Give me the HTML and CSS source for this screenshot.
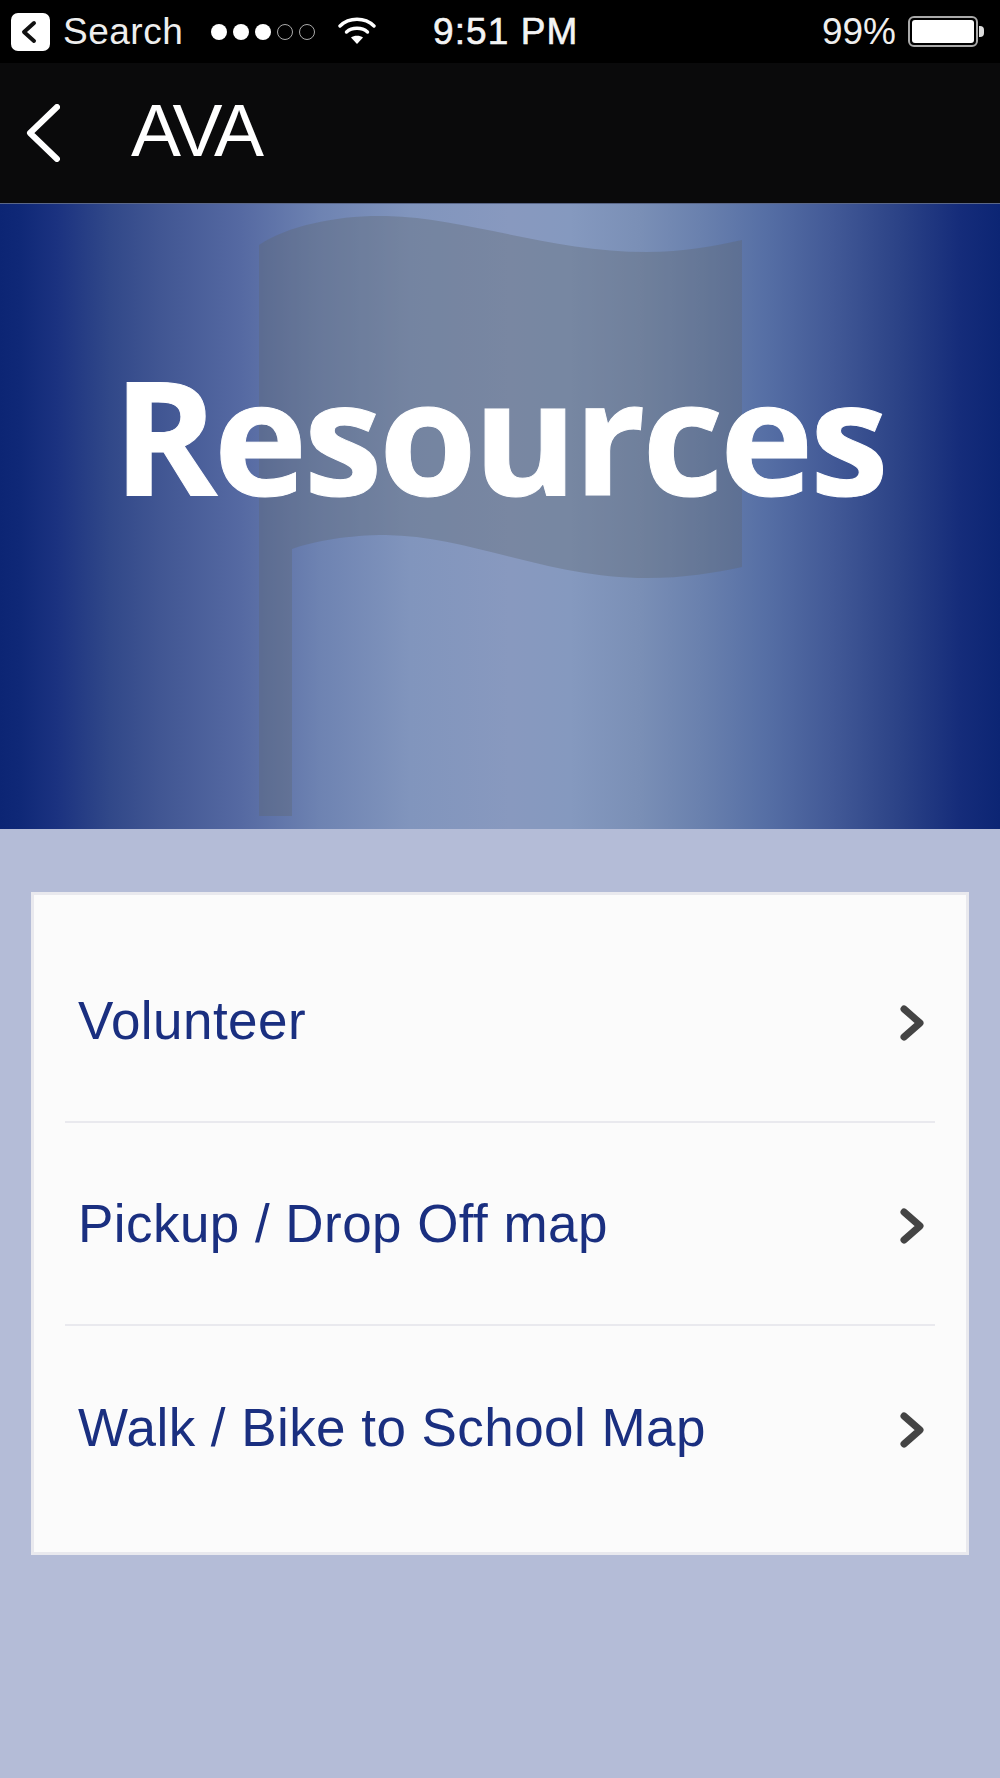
FILE: index.html
```html
<!DOCTYPE html>
<html lang="en">
<head>
  <meta charset="UTF-8">
  <meta name="viewport" content="width=device-width, initial-scale=1.0">
  <title>AVA - Resources</title>
  <link rel="stylesheet" href="styles.css">
</head>
<body>
  <div class="status-bar">
    <div class="status-left">
      <span class="back-badge">
        <svg width="39" height="38" viewBox="0 0 39 38"><path d="M23 10 L13 19 L23 28" fill="none" stroke="#111" stroke-width="4" stroke-linecap="round" stroke-linejoin="round"/></svg>
      </span>
      <span class="status-text search">Search</span>
      <span class="signal">
        <i class="dot"></i><i class="dot"></i><i class="dot"></i><i class="dot off"></i><i class="dot off"></i>
      </span>
      <svg class="wifi" width="38" height="29" viewBox="0 0 38 29">
        <path d="M2 10 C11 1 27 1 36 10" fill="none" stroke="#fff" stroke-width="3.4" stroke-linecap="round"/>
        <path d="M8.5 16 C14 11 24 11 29.5 16" fill="none" stroke="#fff" stroke-width="3.4" stroke-linecap="round"/>
        <path d="M13 21.5 C16 19 22 19 25 21.5 L19 28 Z" fill="#fff"/>
      </svg>
    </div>
    <div class="status-time">9:51 PM</div>
    <div class="status-right">
      <span class="status-text">99%</span>
      <span class="battery"><span class="battery-fill"></span></span>
      <span class="battery-nub"></span>
    </div>
  </div>

  <div class="nav-bar">
    <svg class="nav-back" width="34" height="58" viewBox="0 0 34 58"><path d="M31 3 L4 29 L31 55" fill="none" stroke="#fff" stroke-width="6" stroke-linecap="round" stroke-linejoin="round"/></svg>
    <div class="nav-title">AVA</div>
  </div>

  <div class="hero">
    <svg class="hero-flag" width="483" height="601" viewBox="0 0 483 601">
      <path d="M0 30 C30 10 80 0 127 1 C210 3 290 37 388 37 C425 37 455 31 483 25 L483 352 C455 358 425 363 388 363 C290 363 210 321 127 320 C90 320 55 326 33 334 L33 601 L0 601 Z" fill="#5f6670" fill-opacity="0.36"/>
    </svg>
    <h1 class="hero-title">Resources</h1>
  </div>

  <div class="content">
    <div class="card">
      <a class="row">
        <span class="row-label">Volunteer</span>
        <svg class="chevron" width="26" height="38" viewBox="0 0 26 38"><path d="M5 5 L21 19 L5 33" fill="none" stroke="#444" stroke-width="7" stroke-linecap="round" stroke-linejoin="round"/></svg>
      </a>
      <a class="row">
        <span class="row-label">Pickup / Drop Off map</span>
        <svg class="chevron" width="26" height="38" viewBox="0 0 26 38"><path d="M5 5 L21 19 L5 33" fill="none" stroke="#444" stroke-width="7" stroke-linecap="round" stroke-linejoin="round"/></svg>
      </a>
      <a class="row">
        <span class="row-label">Walk / Bike to School Map</span>
        <svg class="chevron" width="26" height="38" viewBox="0 0 26 38"><path d="M5 5 L21 19 L5 33" fill="none" stroke="#444" stroke-width="7" stroke-linecap="round" stroke-linejoin="round"/></svg>
      </a>
    </div>
  </div>
</body>
</html>
```

FILE: styles.css
```css
body, h1 {
    margin: 0;
}

body {
    width: 1000px;
    height: 1778px;
    overflow: hidden;
    background-color: #b4bcd7;
    font-family: "Liberation Sans", Arial, sans-serif;
}

/* status bar */
.status-bar {
    height: 63px;
    background-color: #000;
    color: #eee;
    display: flex;
    align-items: center;
}
.status-left {
    display: flex;
    align-items: center;
    padding-left: 11px;
}
.back-badge {
    width: 39px;
    height: 38px;
    background-color: #fff;
    border-radius: 7px;
    display: flex;
}
.status-text {
    font-size: 37px;
    line-height: 40px;
}
.search {
    margin-left: 13px;
    width: 148px;
    letter-spacing: .5px;
}
.signal {
    display: flex;
    gap: 6px;
}
.dot {
    width: 16px;
    height: 16px;
    border-radius: 50%;
    background-color: #fff;
    box-sizing: border-box;
}
.dot.off {
    background: none;
    border: 1.5px solid #aaa;
}
.wifi {
    margin-left: 23px;
    margin-top: -2px;
}
.status-time {
    margin-left: 57px;
    font-size: 37px;
    font-weight: 500;
    letter-spacing: 1.1px;
    color: #f4f4f4;
    -webkit-text-stroke: .6px #f4f4f4;
}
.status-right {
    margin-left: auto;
    display: flex;
    align-items: center;
    padding-right: 16px;
}
.status-right .status-text {
    margin-right: 12px;
}
.battery {
    width: 70px;
    height: 31px;
    border: 2px solid #aaa;
    border-radius: 6px;
    box-sizing: border-box;
    padding: 2px;
    display: flex;
}
.battery-fill {
    flex: 1;
    background-color: #fff;
    border-radius: 3px;
}
.battery-nub {
    width: 5px;
    height: 11px;
    background-color: #ddd;
    border-radius: 0 4px 4px 0;
    margin-left: 1px;
}

/* nav */
.nav-bar {
    height: 140px;
    background-color: #0a0a0b;
    display: flex;
    align-items: center;
    padding-left: 26px;
    box-sizing: border-box;
}
.nav-back {
    margin-top: -1px;
}
.nav-title {
    margin-left: 71px;
    margin-top: -6px;
    font-size: 75px;
    letter-spacing: -3px;
    color: #fff;
}

/* hero */
.hero {
    height: 626px;
    position: relative;
    background: linear-gradient(to right, #0c2574 0%, #0f2877 2%, #1b3280 5.7%, #314889 11%, #415693 16%, #5569a2 24%, #6e83b2 32%, #8195bd 41%, #8899bf 51%, #8599bf 57%, #7a8fb6 64%, #6a81ae 70%, #566fa5 76.5%, #435a97 83%, #2b4286 90%, #152c7a 96%, #0c2574 100%);
    border-top: 1px solid #5a6788;
    box-sizing: border-box;
    text-align: center;
}
.hero-flag {
    position: absolute;
    left: 259px;
    top: 11px;
}
.hero-title {
    position: relative;
    font-family: "Open Sans", "Noto Sans", sans-serif;
    font-weight: 700;
    font-size: 158px;
    line-height: 200px;
    letter-spacing: -3.4px;
    color: #fff;
    padding-top: 130px;
    padding-right: 2px;
    -webkit-text-stroke: 1px #fff;
}

/* list */
.content {
    padding: 63px 31px 0;
}
.card {
    background-color: #fbfbfb;
    border: 3px solid #e9e9ee;
    box-sizing: border-box;
    height: 663px;
    padding: 25px 31px 0;
}
.row {
    height: 203px;
    display: flex;
    align-items: center;
    justify-content: space-between;
    box-sizing: border-box;
    padding: 0 10px 0 13px;
    border-bottom: 2px solid #e9e9ee;
}
.row:last-child {
    border-bottom: none;
}
.row-label {
    font-size: 53px;
    letter-spacing: .45px;
    color: #1a2f80;
}
.chevron {
    margin-top: 4px;
}
```
